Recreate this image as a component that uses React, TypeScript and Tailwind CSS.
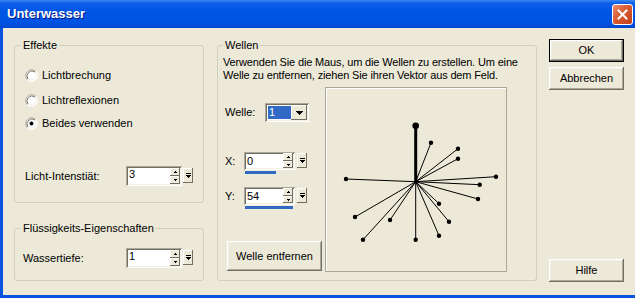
import React from "react";

const raised =
  "bg-[#ECE9D8] shadow-[inset_-1px_-1px_0_#716f64,inset_1px_1px_0_#ffffff,inset_-2px_-2px_0_#aca899,inset_2px_2px_0_#f1efe2]";
const smallRaised =
  "bg-[#ECE9D8] shadow-[inset_-1px_-1px_0_#716f64,inset_1px_1px_0_#ffffff]";
const sunken =
  "bg-white shadow-[inset_1px_1px_0_#aca899,inset_-1px_-1px_0_#ffffff,inset_2px_2px_0_#716f64,inset_-2px_-2px_0_#f1efe2]";

function Group({
  label,
  className,
  labelCls,
  children,
}: {
  label: string;
  className: string;
  labelCls: string;
  children: React.ReactNode;
}) {
  return (
    <div className={`relative border border-[#d0d0bf] rounded-[3px] ${className}`}>
      <span className={`absolute top-[-7px] px-[2px] bg-[#ECE9D8] leading-[13px] whitespace-nowrap ${labelCls}`}>
        {label}
      </span>
      {children}
    </div>
  );
}

function Radio({ label, checked, className = "" }: { label: string; checked?: boolean; className?: string }) {
  return (
    <div className={`flex items-center gap-[4px] h-[13px] ${className}`}>
      <svg width="13" height="13" viewBox="0 0 13 13">
        <circle cx="6.5" cy="6.5" r="6" fill="#ffffff" />
        <path d="M2.26 10.74 A6 6 0 0 1 10.74 2.26" stroke="#aca899" fill="none" strokeWidth="1" />
        <path d="M10.74 2.26 A6 6 0 0 1 2.26 10.74" stroke="#ffffff" fill="none" strokeWidth="1" />
        <path d="M3 10 A5 5 0 0 1 10 3" stroke="#716f64" fill="none" strokeWidth="1" />
        <path d="M10 3 A5 5 0 0 1 3 10" stroke="#f1efe2" fill="none" strokeWidth="1" />
        {checked && <circle cx="6.5" cy="6.5" r="2" fill="#000000" />}
      </svg>
      <span className="whitespace-nowrap">{label}</span>
    </div>
  );
}

function SpinBtn({ up, hCls }: { up?: boolean; hCls: string }) {
  return (
    <div className={`${smallRaised} w-[10px] ${hCls} flex items-center justify-center`}>
      <svg width="3" height="2" viewBox="0 0 3 2">
        {up ? <path d="M1 0h1v1h1v1H0V1h1z" fill="#000" /> : <path d="M0 0h3v1H2v1H1V1H0z" fill="#000" />}
      </svg>
    </div>
  );
}

function SepBtn({ mtCls }: { mtCls: string }) {
  return (
    <div className={`${smallRaised} w-[10px] h-[15px] ${mtCls} flex items-center justify-center`}>
      <svg width="5" height="5" viewBox="0 0 5 5">
        <path d="M0 0h5v1H0z M0 2h5v1H0z M1 3h3v1H1z M2 4h1v1H2z" fill="#000" />
      </svg>
    </div>
  );
}

function Spinner({
  value,
  editCls,
  gapCls,
  small,
}: {
  value: string;
  editCls: string;
  gapCls: string;
  small?: boolean;
}) {
  return (
    <div className={`flex items-start ${gapCls}`}>
      <div className={`${sunken} flex ${editCls}`}>
        <span className={`pl-[3px] leading-[13px] ${small ? "pt-[3px]" : "pt-[2px]"}`}>{value}</span>
        <div className={`ml-auto mr-[2px] flex flex-col ${small ? "mt-[1px]" : "mt-[2px]"}`}>
          <SpinBtn up hCls={small ? "h-[8px]" : "h-[8px]"} />
          <SpinBtn hCls={small ? "h-[7px]" : "h-[8px]"} />
        </div>
      </div>
      <SepBtn mtCls={small ? "mt-[1px]" : "mt-[2px]"} />
    </div>
  );
}

const center: [number, number] = [89.7, 93.7];
const rays: [number, number][] = [
  [105, 54.7],
  [132, 60.7],
  [132, 70.7],
  [20, 91],
  [170, 88.7],
  [153.7, 96.7],
  [152, 111],
  [113, 115.7],
  [123, 133.7],
  [113, 147.7],
  [89.7, 151.7],
  [64, 132],
  [29, 129],
  [37, 151.7],
];

export default function App() {
  return (
    <div className="w-[635px] h-[298px] flex flex-col bg-[#0A53E0] overflow-hidden font-['Liberation_Sans',Arial,sans-serif] text-[11px] leading-[13px] text-black">
      {/* Title bar */}
      <div className="h-[28px] shrink-0 flex items-center pl-[7px] pr-[2px] bg-[linear-gradient(180deg,#3A86F2_0%,#0C5EE8_12%,#0055E5_40%,#0053E2_80%,#0046CD_100%)]">
        <span className="text-white font-bold text-[13px] leading-[16px] [text-shadow:1px_1px_0_#0a1883]">
          Unterwasser
        </span>
        <div className="ml-auto w-[21px] h-[21px] rounded-[3px] border border-white bg-[linear-gradient(135deg,#EC8D6B_0%,#D95A33_45%,#C23E1A_100%)] flex items-center justify-center">
          <svg width="11" height="11" viewBox="0 0 11 11">
            <path d="M1.5 1.5 L9.5 9.5 M9.5 1.5 L1.5 9.5" stroke="#ffffff" strokeWidth="2" strokeLinecap="square" />
          </svg>
        </div>
      </div>

      {/* Body */}
      <div className="flex-1 ml-[3px] mb-[3px] bg-[#ECE9D8] flex pl-[11px] pt-[11px]">
        {/* Left column */}
        <div className="w-[190px] mt-[6px] flex flex-col">
          <Group label="Effekte" className="h-[158px]" labelCls="left-[6px]">
            <div className="pl-[10px] pt-[23px] flex flex-col">
              <Radio label="Lichtbrechung" />
              <Radio label="Lichtreflexionen" className="mt-[12px]" />
              <Radio label="Beides verwenden" checked className="mt-[10px]" />
              <div className="mt-[36px] flex items-center h-[20px]">
                <span className="w-[101px] whitespace-nowrap">Licht-Intenstiät:</span>
                <Spinner value="3" editCls="w-[56px] h-[20px]" gapCls="gap-[1px]" />
              </div>
            </div>
          </Group>
          <Group label="Flüssigkeits-Eigenschaften" className="h-[53px] mt-[25px]" labelCls="left-[6px]">
            <div className="pl-[8px] pt-[19px] flex items-center">
              <span className="w-[103px]">Wassertiefe:</span>
              <Spinner value="1" editCls="w-[56px] h-[20px]" gapCls="gap-[1px]" />
            </div>
          </Group>
        </div>

        {/* Wellen */}
        <Group label="Wellen" className="w-[320px] h-[236px] mt-[6px] ml-[13px]" labelCls="left-[5px]">
          <div className="pl-[5px] pt-[10px] whitespace-nowrap tracking-[-0.15px]">
            Verwenden Sie die Maus, um die Wellen zu erstellen. Um eine
            <br />
            Welle zu entfernen, ziehen Sie ihren Vektor aus dem Feld.
          </div>
          <div className="flex pl-[7px] mt-[5px]">
            <div className="w-[97px] h-[185px] flex flex-col">
              <div className="mt-[16px] h-[19px] flex items-center">
                <span className="w-[40px]">Welle:</span>
                <div className={`${sunken} w-[44px] h-[19px] flex items-center p-[2px]`}>
                  <div className="ml-[1px] w-[23px] h-[13px] bg-[#316AC5] text-white pl-[1px] leading-[13px]">1</div>
                  <div className={`${smallRaised} ml-auto w-[16px] h-[15px] flex items-center justify-center`}>
                    <svg width="7" height="4" viewBox="0 0 7 4">
                      <path d="M0 0h7v1H6v1H5v1H4v1H3V3H2V2H1V1H0z" fill="#000" />
                    </svg>
                  </div>
                </div>
              </div>

              <div className="mt-[30px] flex items-start">
                <span className="w-[19px] h-[18px] flex items-center">X:</span>
                <div className="flex flex-col">
                  <Spinner value="0" editCls="w-[51px] h-[18px]" gapCls="gap-[2px]" small />
                  <div className="mt-[1px] ml-[1px] w-[31px] h-[3px] bg-[#316AC5]" />
                </div>
              </div>

              <div className="mt-[13px] flex items-start">
                <span className="w-[19px] h-[18px] flex items-center">Y:</span>
                <div className="flex flex-col">
                  <Spinner value="54" editCls="w-[51px] h-[18px]" gapCls="gap-[2px]" small />
                  <div className="mt-[1px] ml-[1px] w-[48px] h-[3px] bg-[#316AC5]" />
                </div>
              </div>

              <button className={`${raised} mt-auto mb-[1px] ml-[2px] w-[95px] h-[30px] flex items-center justify-center`}>
                Welle entfernen
              </button>
            </div>

            <div className="ml-[3px] w-[182px] h-[185px] border border-[#aca899] shadow-[inset_1px_1px_0_#ffffff]">
              <svg width="180" height="183" viewBox="0 0 180 183">
                {rays.map(([x, y], i) => (
                  <g key={i}>
                    <line x1={center[0]} y1={center[1]} x2={x} y2={y} stroke="#000" strokeWidth="1" />
                    <circle cx={x} cy={y} r="2.2" fill="#000" />
                  </g>
                ))}
                <line x1={center[0]} y1={center[1]} x2={89.7} y2={37.7} stroke="#000" strokeWidth="3" />
                <circle cx={89.7} cy={37.7} r="3.3" fill="#000" />
              </svg>
            </div>
          </div>
        </Group>

        {/* Right buttons */}
        <div className="ml-[12px] w-[75px] flex flex-col">
          <button className={`${raised} h-[23px] border border-black flex items-center justify-center`}>OK</button>
          <button className={`${raised} mt-[5px] h-[23px] flex items-center justify-center`}>Abbrechen</button>
          <button className={`${raised} mt-auto mb-[13px] h-[23px] flex items-center justify-center`}>Hilfe</button>
        </div>
      </div>
    </div>
  );
}
